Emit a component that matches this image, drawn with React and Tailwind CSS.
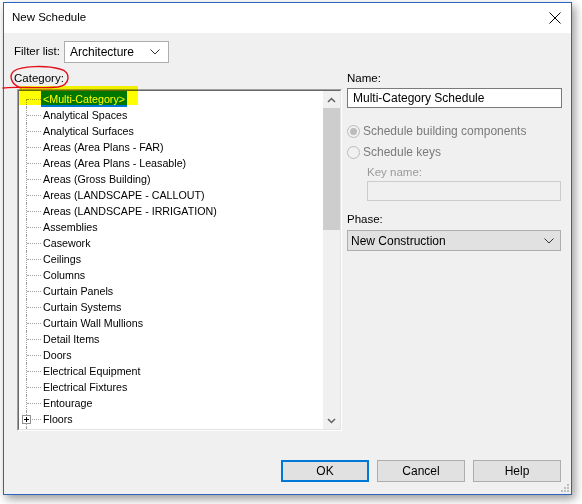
import React from "react";

const items = [
  "<Multi-Category>",
  "Analytical Spaces",
  "Analytical Surfaces",
  "Areas (Area Plans - FAR)",
  "Areas (Area Plans - Leasable)",
  "Areas (Gross Building)",
  "Areas (LANDSCAPE - CALLOUT)",
  "Areas (LANDSCAPE - IRRIGATION)",
  "Assemblies",
  "Casework",
  "Ceilings",
  "Columns",
  "Curtain Panels",
  "Curtain Systems",
  "Curtain Wall Mullions",
  "Detail Items",
  "Doors",
  "Electrical Equipment",
  "Electrical Fixtures",
  "Entourage",
  "Floors",
  "Furniture",
];

const Chevron = () => (
  <svg width="10" height="6" viewBox="0 0 10 6">
    <polyline points="0.5,0.5 5,5 9.5,0.5" fill="none" stroke="#333" strokeWidth="1" />
  </svg>
);

const TreeRow = ({ label, index }) => {
  const first = index === 0;
  const expandable = label === "Floors";
  return (
    <div className="flex h-[16px] items-center">
      <div className="relative h-full w-[22px] shrink-0">
        <div
          className={
            first
              ? "absolute left-[7px] top-[8px] bottom-0 border-l border-dotted border-[#a0a0a0]"
              : "absolute left-[7px] top-0 bottom-0 border-l border-dotted border-[#a0a0a0]"
          }
        />
        <div className="absolute left-[8px] right-0 top-[8px] border-t border-dotted border-[#a0a0a0]" />
        {expandable && (
          <div className="absolute left-[3px] top-[4px] w-[9px] h-[9px] border border-[#919191] bg-white flex items-center justify-center">
            <svg width="7" height="7" viewBox="0 0 7 7">
              <line x1="1" y1="3.5" x2="6" y2="3.5" stroke="#000" strokeWidth="1" />
              <line x1="3.5" y1="1" x2="3.5" y2="6" stroke="#000" strokeWidth="1" />
            </svg>
          </div>
        )}
      </div>
      <div
        className={
          first
            ? "h-[16px] leading-[16px] px-[2px] bg-[#0078d7] text-white"
            : "h-[16px] leading-[16px] px-[2px] text-black"
        }
      >
        {label}
      </div>
    </div>
  );
};

const Radio = ({ checked, label }) => (
  <div className="flex h-[16px] items-center gap-[3px]">
    <div className="w-[13px] h-[13px] rounded-full border border-[#bcbcbc] bg-[#f0f0f0] flex items-center justify-center">
      {checked && <div className="w-[7px] h-[7px] rounded-full bg-[#bcbcbc]" />}
    </div>
    <span className="text-[#7a7a7a] text-[12px]">{label}</span>
  </div>
);

const Button = ({ children, primary }) => (
  <button
    className={
      primary
        ? "w-[88px] h-[22px] bg-[#e1e1e1] border-2 border-[#0078d7] text-[12px] text-black"
        : "w-[88px] h-[22px] bg-[#e1e1e1] border border-[#adadad] text-[12px] text-black"
    }
  >
    {children}
  </button>
);

export default function App() {
  return (
    <div className="relative w-[582px] h-[504px] bg-white overflow-hidden font-['Liberation_Sans',Arial,sans-serif] text-[10.7px] text-black">
      <div className="relative ml-[3px] mt-[2px] w-[569px] h-[493px] border border-[#3063c0] bg-[#f0f0f0] shadow-[3px_4px_9px_rgba(0,0,0,0.4)] flex flex-col">
        {/* title bar */}
        <div className="h-[30px] bg-white flex items-center justify-between pl-[8px] pr-[10px] shrink-0">
          <span className="text-[11.5px] text-black">New Schedule</span>
          <svg width="12" height="12" viewBox="0 0 12 12">
            <line x1="0.5" y1="0.5" x2="11.5" y2="11.5" stroke="#000" strokeWidth="1" />
            <line x1="11.5" y1="0.5" x2="0.5" y2="11.5" stroke="#000" strokeWidth="1" />
          </svg>
        </div>

        {/* body */}
        <div className="flex flex-1 pl-[10px]">
          {/* left column */}
          <div className="w-[328px] pt-[8px] flex flex-col">
            <div className="flex items-center h-[22px] gap-[4px]">
              <span className="text-[11.5px]">Filter list:</span>
              <div className="w-[105px] h-[22px] bg-white border border-[#adadad] flex items-center justify-between pl-[5px] pr-[8px]">
                <span className="text-[12px]">Architecture</span>
                <Chevron />
              </div>
            </div>
            <div className="mt-[8px] h-[14px] leading-[14px] text-[11.5px]">Category:</div>
            <div className="mt-[4px] ml-[3px] w-[325px] h-[342px] border-t border-l border-[#a0a0a0] border-r border-b border-r-white border-b-white">
              <div className="w-full h-full border-t border-l border-[#696969] border-r border-b border-r-[#e3e3e3] border-b-[#e3e3e3] bg-white flex overflow-hidden">
                <div className="flex-1 overflow-hidden">
                  {items.map((it, i) => (
                    <TreeRow key={it} label={it} index={i} />
                  ))}
                </div>
                <div className="w-[17px] bg-[#f0f0f0] flex flex-col">
                  <div className="h-[17px] flex items-center justify-center">
                    <svg width="9" height="6" viewBox="0 0 9 6">
                      <polyline points="1,5 4.5,1.5 8,5" fill="none" stroke="#606060" strokeWidth="1.5" />
                    </svg>
                  </div>
                  <div className="h-[122px] bg-[#cdcdcd]" />
                  <div className="flex-1" />
                  <div className="h-[17px] flex items-center justify-center">
                    <svg width="9" height="6" viewBox="0 0 9 6">
                      <polyline points="1,1 4.5,4.5 8,1" fill="none" stroke="#606060" strokeWidth="1.5" />
                    </svg>
                  </div>
                </div>
              </div>
            </div>
          </div>

          {/* right column */}
          <div className="ml-[5px] w-[215px] pt-[38px] flex flex-col">
            <div className="h-[14px] leading-[14px] text-[11.5px]">Name:</div>
            <div className="mt-[3px] h-[20px] bg-white border border-[#7a7a7a] flex items-center pl-[5px] text-[12px]">
              Multi-Category Schedule
            </div>
            <div className="mt-[15px]">
              <Radio checked label="Schedule building components" />
            </div>
            <div className="mt-[5px]">
              <Radio label="Schedule keys" />
            </div>
            <div className="mt-[5px] ml-[20px] h-[14px] leading-[14px] text-[11.5px] text-[#9a9a9a]">Key name:</div>
            <div className="mt-[2px] ml-[20px] w-[194px] h-[20px] bg-[#f0f0f0] border border-[#cccccc]" />
            <div className="mt-[11px] h-[14px] leading-[14px] text-[11.5px]">Phase:</div>
            <div className="mt-[4px] w-[214px] h-[21px] bg-[#e1e1e1] border border-[#adadad] flex items-center justify-between pl-[3px] pr-[6px]">
              <span className="text-[12px]">New Construction</span>
              <Chevron />
            </div>
          </div>
        </div>

        {/* buttons */}
        <div className="flex justify-end gap-[8px] pr-[10px] pb-[12px] shrink-0">
          <Button primary>OK</Button>
          <Button>Cancel</Button>
          <Button>Help</Button>
        </div>

        {/* resize grip */}
        <svg className="absolute right-[2px] bottom-[2px]" width="8" height="8" viewBox="0 0 8 8">
          <rect x="6" y="0" width="2" height="2" fill="#bdbdbd" />
          <rect x="3" y="3" width="2" height="2" fill="#bdbdbd" />
          <rect x="6" y="3" width="2" height="2" fill="#bdbdbd" />
          <rect x="0" y="6" width="2" height="2" fill="#bdbdbd" />
          <rect x="3" y="6" width="2" height="2" fill="#bdbdbd" />
          <rect x="6" y="6" width="2" height="2" fill="#bdbdbd" />
        </svg>
      </div>

      {/* yellow highlighter annotation */}
      <div className="absolute left-[19px] top-[86px] w-[119px] h-[19px] bg-[#ffff00] mix-blend-multiply" />

      {/* red hand-drawn circle annotation */}
      <svg className="absolute left-0 top-0 pointer-events-none" width="90" height="100" viewBox="0 0 90 100">
        <path
          d="M3,88 C14,86 40,89 58,87 C70,85 72,72 60,69 C46,65 21,66 14,71 C9,75 10,84 21,88"
          fill="none"
          stroke="#e3101a"
          strokeWidth="1.4"
          strokeLinecap="round"
        />
      </svg>
    </div>
  );
}
